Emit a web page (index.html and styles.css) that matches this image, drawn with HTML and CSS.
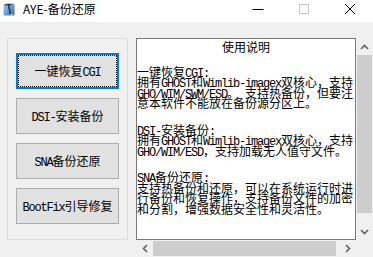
FILE: index.html
```html
<!DOCTYPE html>
<html lang="zh-CN">
<head>
    <meta charset="UTF-8">
    <meta name="viewport" content="width=device-width, initial-scale=1.0">
    <title>AYE-备份还原</title>
    <link rel="stylesheet" href="styles.css">
</head>
<body>
    <div class="window">
        <div class="titlebar">
            <svg class="app-icon" width="12" height="14" viewBox="0 0 12 14">
                <defs>
                    <linearGradient id="ico" x1="0" y1="0" x2="1" y2="1">
                        <stop offset="0" stop-color="#a9d6f7"/>
                        <stop offset="1" stop-color="#2b66b8"/>
                    </linearGradient>
                </defs>
                <rect x="0.5" y="1.5" width="11" height="12" rx="1.5" fill="url(#ico)"/>
                <path d="M2 3.5 Q5 1.5 9 3" stroke="#3a3a3a" stroke-width="1.2" fill="none"/>
                <path d="M5.5 2.8 L7.5 12.5" stroke="#2a2a2a" stroke-width="1.4"/>
                <path d="M7.5 12.5 L9.5 12.5" stroke="#ffffff" stroke-width="1"/>
            </svg>
            <span class="title">AYE-备份还原</span>
            <div class="controls">
                <span class="ctl">
                    <svg width="12" height="12" viewBox="0 0 12 12"><path d="M0.5 6.5 H11.5" stroke="#000" stroke-width="1"/></svg>
                </span>
                <span class="ctl">
                    <svg width="12" height="12" viewBox="0 0 12 12"><rect x="1.5" y="1.5" width="9" height="9" stroke="#c4c4c4" stroke-width="1" fill="none"/></svg>
                </span>
                <span class="ctl">
                    <svg width="12" height="12" viewBox="0 0 12 12"><path d="M1 1 L11 11 M11 1 L1 11" stroke="#000" stroke-width="1"/></svg>
                </span>
            </div>
        </div>

        <div class="client">
            <div class="groupbox">
                <button class="btn focused">一键恢复<span class="en">CGI</span></button>
                <button class="btn"><span class="en">DSI-</span>安装备份</button>
                <button class="btn"><span class="en">SNA</span>备份还原</button>
                <button class="btn"><span class="en">BootFix</span>引导修复</button>
            </div>

            <div class="memo">
                <div class="memo-text">
                    <div class="memo-title">使用说明</div>
                    <p>一键恢复<span class="en">CGI:</span><br>
                    拥有<span class="en">GHOST</span>和<span class="en">Wimlib-imagex</span>双核心，支持<br>
                    <span class="en">GHO/WIM/SWM/ESD</span>。<span class="en"> </span>支持热备份，但要注<br>
                    意本软件不能放在备份源分区上。</p>
                    <p><span class="en">DSI-</span>安装备份<span class="en">:</span><br>
                    拥有<span class="en">GHOST</span>和<span class="en">Wimlib-imagex</span>双核心，支持<br>
                    <span class="en">GHO/WIM/ESD</span>，支持加载无人值守文件。</p>
                    <p><span class="en">SNA</span>备份还原<span class="en">:</span><br>
                    支持热备份和还原，可以在系统运行时进<br>
                    行备份和恢复操作，支持备份文件的加密<br>
                    和分割，增强数据安全性和灵活性。</p>
                </div>
                <div class="vscroll">
                    <span class="arrow">
                        <svg width="9" height="6" viewBox="0 0 9 6"><path d="M1 5 L4.5 1.5 L8 5" stroke="#606060" stroke-width="1.6" fill="none"/></svg>
                    </span>
                    <div class="track"><div class="thumb"></div></div>
                    <span class="arrow">
                        <svg width="9" height="6" viewBox="0 0 9 6"><path d="M1 1 L4.5 4.5 L8 1" stroke="#606060" stroke-width="1.6" fill="none"/></svg>
                    </span>
                </div>
                <div class="hscroll">
                    <span class="arrow">
                        <svg width="6" height="9" viewBox="0 0 6 9"><path d="M5 1 L1.5 4.5 L5 8" stroke="#606060" stroke-width="1.6" fill="none"/></svg>
                    </span>
                    <div class="track"><div class="thumb"></div></div>
                    <span class="arrow">
                        <svg width="6" height="9" viewBox="0 0 6 9"><path d="M1 1 L4.5 4.5 L1 8" stroke="#606060" stroke-width="1.6" fill="none"/></svg>
                    </span>
                </div>
                <div class="corner"></div>
            </div>
        </div>
    </div>
</body>
</html>
```

FILE: styles.css
```css
body, html {
    margin: 0;
    padding: 0;
    width: 100%;
    height: 100%;
    font-family: "Noto Sans CJK SC", sans-serif;
    font-size: 12px;
    color: #000;
    overflow: hidden;
}

.window {
    width: 373px;
    height: 257px;
    background-color: #f0f0f0;
    display: flex;
    flex-direction: column;
}

/* Title bar */
.titlebar {
    height: 22px;
    background-color: #fff;
    display: flex;
    align-items: flex-start;
}

.app-icon {
    margin: 2px 0 0 3px;
}

.title {
    margin-left: 8px;
    line-height: 18px;
}

.controls {
    margin-left: auto;
    display: flex;
}

.ctl {
    width: 46px;
    height: 18px;
    display: flex;
    justify-content: center;
    align-items: center;
}

/* Client area */
.client {
    display: flex;
    gap: 8px;
    padding: 16px 0 0 7px;
}

.groupbox {
    width: 103px;
    height: 172px;
    border: 1px solid #dcdcdc;
    padding: 14px 8px;
    display: flex;
    flex-direction: column;
    gap: 9px;
}

.btn {
    width: 103px;
    height: 36px;
    padding: 0;
    background-color: #e1e1e1;
    border: 1px solid #adadad;
    font-family: "Noto Sans CJK SC", sans-serif;
    font-size: 12px;
    color: #000;
    line-height: 14px;
}

.btn.focused {
    border: 2px solid #0078d7;
    outline: 1px dotted #000;
    outline-offset: -3px;
}

.en {
    font-family: "Liberation Mono", monospace;
    font-size: 12px;
    letter-spacing: -1.2px;
    white-space: pre;
    line-height: 0;
}

/* Text box with scrollbars */
.memo {
    display: grid;
    grid-template-columns: 220px 17px;
    grid-template-rows: 202px 17px;
}

.memo-text {
    background-color: #fff;
    border: 1px solid #7a7a7a;
    padding: 3px 0 0 0;
    overflow: hidden;
    white-space: nowrap;
    line-height: 10.5px;
}

.memo-title {
    text-align: center;
    margin-bottom: 14px;
}

.memo-text p {
    margin: 0 0 16px;
}

.vscroll {
    display: flex;
    flex-direction: column;
}

.vscroll .arrow {
    height: 17px;
    display: flex;
    justify-content: center;
    align-items: center;
}

.vscroll .track {
    flex: 1;
    padding: 0 1px;
}

.vscroll .thumb {
    height: 158px;
    background-color: #cdcdcd;
}

.hscroll {
    display: flex;
}

.hscroll .arrow {
    width: 17px;
    display: flex;
    justify-content: center;
    align-items: center;
}

.hscroll .track {
    flex: 1;
    padding: 1px 0;
}

.hscroll .thumb {
    width: 183px;
    height: 15px;
    background-color: #cdcdcd;
}
```
